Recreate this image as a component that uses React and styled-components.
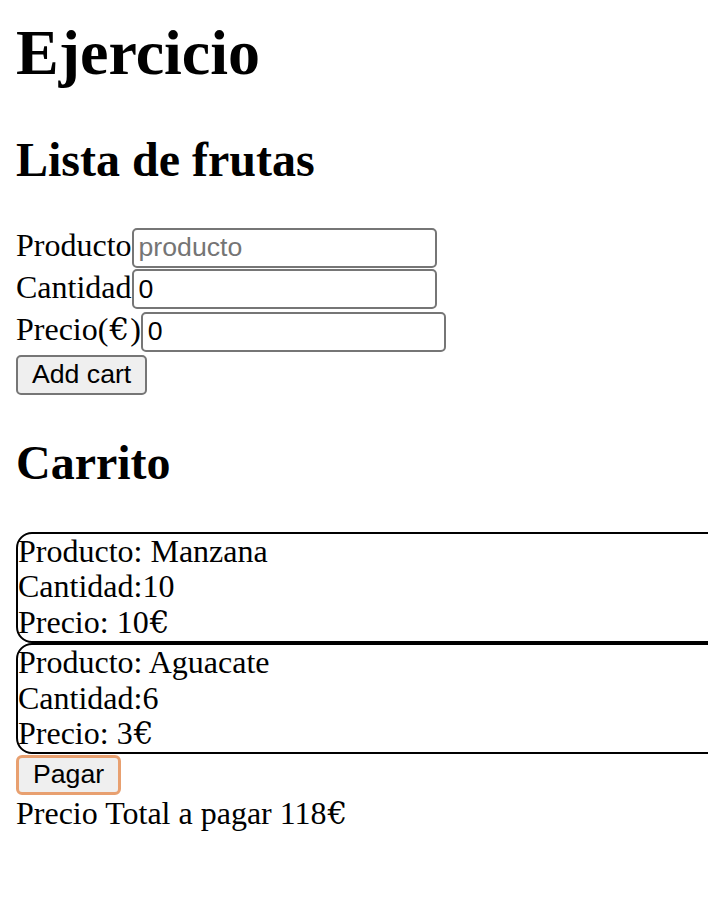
import React, { useState } from 'react'
import styled, { createGlobalStyle } from 'styled-components'

const Global = createGlobalStyle`
html {
    overflow-x: hidden;
}
body {
    margin: 16px;
    font-family: "Liberation Serif", "Times New Roman", serif;
    font-size: 32px;
    color: #000;
    background: #fff;
}
`

const Title = styled.h1`
    font-size: 64px;
    font-weight: bold;
    margin: 0 0 42px;
`

const Sub = styled.h2`
    font-size: 48px;
    font-weight: bold;
    margin: 40px 0 ${p => p.$bottom || 40}px;
`

const Form = styled.form`
    display: flex;
    flex-direction: column;
    align-items: flex-start;
`

const Row = styled.div`
    display: flex;
    align-items: baseline;
    margin-top: ${p => p.$top || 0}px;
`

const Euro = styled.span`
    font-family: "DejaVu Serif", serif;
    font-size: 31px;
    margin: 0 1px;
`

const Input = styled.input`
    box-sizing: border-box;
    width: 305px;
    height: 40px;
    margin: 0;
    padding: 2px 5px;
    border: 2px solid #767676;
    border-radius: 5px;
    font-family: "Liberation Sans", Arial, sans-serif;
    font-size: 26.67px;
    color: #000;
    background: #fff;
    &::placeholder {
        color: #757575;
    }
`

const Button = styled.button`
    box-sizing: border-box;
    height: 40px;
    margin: ${p => p.$top || 0}px 0 0;
    padding: 0 14px;
    border: ${p => (p.$focus ? '3px solid #e8a070' : '2px solid #767676')};
    border-radius: ${p => (p.$focus ? '6px' : '5px')};
    background: #efefef;
    font-family: "Liberation Sans", Arial, sans-serif;
    font-size: 26.67px;
    color: #000;
`

const Cart = styled.div`
    margin-right: -80px;
`

const Card = styled.div`
    border: 2px solid #000;
    border-radius: 16px;
    line-height: 35.8px;
`

const Total = styled.div`
    line-height: 36px;
`

const items = [
    { nombre: 'Manzana', cantidad: 10, precio: 10 },
    { nombre: 'Aguacate', cantidad: 6, precio: 3 },
]

export default function App() {
    const [producto, setProducto] = useState('')
    const [cantidad, setCantidad] = useState(0)
    const [precio, setPrecio] = useState(0)

    const total = items.reduce((acc, it) => acc + it.cantidad * it.precio, 0)

    return (
        <div>
            <Global />
            <Title>Ejercicio</Title>
            <Sub>Lista de frutas</Sub>
            <Form onSubmit={e => e.preventDefault()}>
                <Row>
                    <label>Producto</label>
                    <Input placeholder="producto" value={producto} onChange={e => setProducto(e.target.value)} />
                </Row>
                <Row $top={1}>
                    <label>Cantidad</label>
                    <Input value={cantidad} onChange={e => setCantidad(e.target.value)} />
                </Row>
                <Row $top={2}>
                    <label>Precio(<Euro>€</Euro>)</label>
                    <Input value={precio} onChange={e => setPrecio(e.target.value)} />
                </Row>
                <Button $top={3}>Add cart</Button>
            </Form>
            <Sub $bottom={42}>Carrito</Sub>
            <Cart>
                {items.map(it => (
                    <Card key={it.nombre}>
                        <div>Producto: {it.nombre}</div>
                        <div>Cantidad:{it.cantidad}</div>
                        <div>Precio: {it.precio}<Euro>€</Euro></div>
                    </Card>
                ))}
            </Cart>
            <Button $focus>Pagar</Button>
            <Total>Precio Total a pagar {total}<Euro>€</Euro></Total>
        </div>
    )
}
